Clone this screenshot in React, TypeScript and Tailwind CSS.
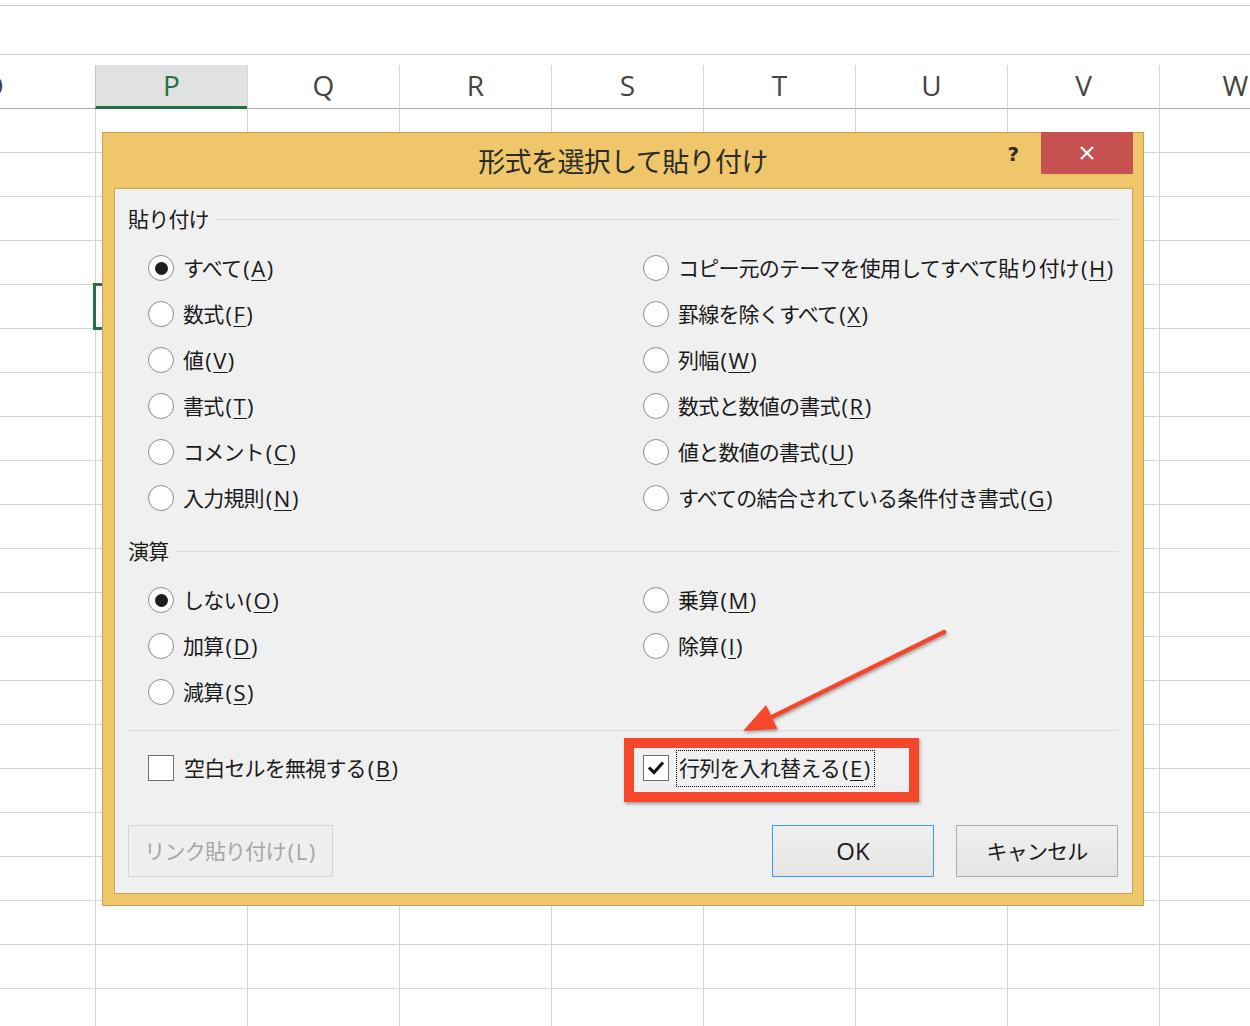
import type { ReactNode } from 'react';

const COLS = ['P', 'Q', 'R', 'S', 'T', 'U', 'V', 'W'];
const ROWS = Array.from({ length: 21 }, (_, i) => i);

// access key in parentheses, latin glyphs a bit larger like Meiryo UI
function Acc({ k }: { k: string }) {
  return (
    <span className="ml-[2px] font-['Open_Sans',sans-serif] text-[22px] tracking-[1.5px]">
      (<span className="underline decoration-1 underline-offset-[3px]">{k}</span>)
    </span>
  );
}

function Radio({ checked, children }: { checked?: boolean; children: ReactNode }) {
  return (
    <div className="flex h-[46px] items-center gap-[9px]">
      <span className="flex h-[26px] w-[26px] shrink-0 items-center justify-center rounded-full border border-[#8c8c8c] bg-white">
        {checked ? <span className="h-[13px] w-[13px] rounded-full bg-[#1e1e1e]" /> : null}
      </span>
      <span className="flex items-center whitespace-nowrap">{children}</span>
    </div>
  );
}

function Check({ checked, focused, children }: { checked?: boolean; focused?: boolean; children: ReactNode }) {
  return (
    <div className="flex h-[46px] items-center gap-[7px]">
      <span className="flex h-[26px] w-[26px] shrink-0 items-center justify-center border border-[#707070] bg-white">
        {checked ? (
          <svg width="18" height="18" viewBox="0 0 18 18">
            <path d="M3 9.5 L7 13.5 L15 4.5" fill="none" stroke="#111" strokeWidth="3" strokeLinecap="square" />
          </svg>
        ) : null}
      </span>
      <span
        className={
          focused
            ? 'flex items-center whitespace-nowrap border border-dotted border-black px-[2px] py-[1px]'
            : 'flex items-center whitespace-nowrap px-[3px] py-[2px]'
        }
      >
        {children}
      </span>
    </div>
  );
}

function SectionLabel({ children }: { children: ReactNode }) {
  return (
    <div className="flex h-[30px] items-center">
      <span className="whitespace-nowrap">{children}</span>
      <span className="ml-[7px] h-px flex-1 bg-[#dcdcdc]" />
    </div>
  );
}

function Sheet() {
  return (
    <div className="w-[1250px]">
      <div className="h-[6px] border-b border-[#c8c8c8]" />
      <div className="h-[49px] border-b border-[#c8c8c8]" />
      <div className="h-[10px]" />
      <div className="flex h-[44px] font-['Open_Sans',sans-serif] text-[28px] text-[#444]">
        <div className="flex w-[95px] shrink-0 items-center border-b border-[#ababab] pb-[4px]">
          <span className="-ml-[18px]">O</span>
        </div>
        {COLS.map((c) => (
          <div
            key={c}
            className={
              c === 'P'
                ? 'flex w-[152px] shrink-0 items-center justify-center border-b-[3px] border-l border-[#c4c4c4] border-b-[#217346] bg-[#e1e1e1] pb-[2px] text-[#217346]'
                : 'flex w-[152px] shrink-0 items-center justify-center border-b border-l border-[#d6d6d6] border-b-[#ababab] pb-[4px]'
            }
          >
            {c}
          </div>
        ))}
      </div>
      {ROWS.map((r) => (
        <div key={r} className="flex h-[44px] border-b border-[#d4d4d4]">
          <div className="w-[95px] shrink-0" />
          {COLS.map((c) => (
            <div key={c} className="w-[152px] shrink-0 border-l border-[#d4d4d4]" />
          ))}
        </div>
      ))}
    </div>
  );
}

function Dialog() {
  return (
    <div className="absolute left-[102px] top-[132px] flex h-[774px] w-[1042px] flex-col border border-[#c6a14f] bg-[#efc76a] font-['Noto_Sans_CJK_JP',sans-serif] text-[#1a1a1a]">
      <div className="grid h-[55px] shrink-0 grid-cols-[1fr_auto_1fr]">
        <div />
        <div className="flex items-center pt-[1px] text-[27px] tracking-[-0.6px] text-[#2b2b2b]">形式を選択して貼り付け</div>
        <div className="flex items-start justify-end pr-[10px]">
          <span className="mr-[22px] mt-[6px] font-['DejaVu_Sans',sans-serif] text-[20px] font-bold text-[#2a2a2a]">?</span>
          <div className="-mt-px flex h-[42px] w-[92px] items-center justify-center bg-[#c75050]">
            <svg width="14" height="14" viewBox="0 0 14 14">
              <path d="M1 1 L13 13 M13 1 L1 13" stroke="#fff" strokeWidth="2.2" />
            </svg>
          </div>
        </div>
      </div>
      <div className="mb-[11px] ml-[11px] mr-[10px] flex-1 border border-[#c9a551] bg-[#f0f0f0] pl-[13px] pr-[14px] pt-[15px] text-[21px] tracking-[-0.8px]">
        <SectionLabel>貼り付け</SectionLabel>
        <div className="mt-[11px] flex pl-[20px]">
          <div className="w-[495px]">
            <Radio checked>すべて<Acc k="A" /></Radio>
            <Radio>数式<Acc k="F" /></Radio>
            <Radio>値<Acc k="V" /></Radio>
            <Radio>書式<Acc k="T" /></Radio>
            <Radio>コメント<Acc k="C" /></Radio>
            <Radio>入力規則<Acc k="N" /></Radio>
          </div>
          <div>
            <Radio>コピー元のテーマを使用してすべて貼り付け<Acc k="H" /></Radio>
            <Radio>罫線を除くすべて<Acc k="X" /></Radio>
            <Radio>列幅<Acc k="W" /></Radio>
            <Radio>数式と数値の書式<Acc k="R" /></Radio>
            <Radio>値と数値の書式<Acc k="U" /></Radio>
            <Radio>すべての結合されている条件付き書式<Acc k="G" /></Radio>
          </div>
        </div>
        <div className="mt-[15px]">
          <SectionLabel>演算</SectionLabel>
        </div>
        <div className="mt-[11px] flex pl-[20px]">
          <div className="w-[495px]">
            <Radio checked>しない<Acc k="O" /></Radio>
            <Radio>加算<Acc k="D" /></Radio>
            <Radio>減算<Acc k="S" /></Radio>
          </div>
          <div>
            <Radio>乗算<Acc k="M" /></Radio>
            <Radio>除算<Acc k="I" /></Radio>
          </div>
        </div>
        <div className="mt-[15px] h-px bg-[#dcdcdc]" />
        <div className="mt-[14px] flex pl-[20px]">
          <div className="w-[495px]">
            <Check>空白セルを無視する<Acc k="B" /></Check>
          </div>
          <div>
            <Check checked focused>行列を入れ替える<Acc k="E" /></Check>
          </div>
        </div>
        <div className="mt-[34px] flex h-[52px] items-stretch">
          <div className="flex w-[205px] items-center justify-center border border-[#d6d6d6] bg-[#efefef] text-[21px] text-[#a6a6a6]">
            リンク貼り付け<span className="ml-[2px] font-['Open_Sans',sans-serif] text-[22px] tracking-[1.5px]">(L)</span>
          </div>
          <div className="ml-auto flex w-[162px] items-center justify-center border border-[#3c9ae8] bg-gradient-to-b from-[#f0f0f0] to-[#e5e5e5] font-['Open_Sans',sans-serif] text-[24px] tracking-normal">
            OK
          </div>
          <div className="ml-[22px] flex w-[162px] items-center justify-center border border-[#adadad] bg-gradient-to-b from-[#f0f0f0] to-[#e5e5e5] text-[21px]">
            キャンセル
          </div>
        </div>
      </div>
    </div>
  );
}

export default function App() {
  return (
    <div className="relative h-[1026px] w-[1250px] overflow-hidden bg-white">
      <Sheet />
      <div className="absolute left-[93px] top-[283px] h-[47px] w-[157px] border-[3px] border-[#217346]" />
      <Dialog />
      <div className="absolute left-[624px] top-[738px] h-[64px] w-[295px] border-[10px] border-[#f4472b] shadow-[1px_2px_3px_rgba(0,0,0,0.35)]" />
      <svg className="absolute left-[730px] top-[620px]" width="230" height="125" viewBox="0 0 230 125">
        <g style={{ filter: 'drop-shadow(1px 2px 1.5px rgba(0,0,0,0.3))' }}>
          <path d="M214 12 L42 97" stroke="#f4472b" strokeWidth="4.5" strokeLinecap="round" />
          <path d="M13 111 L47.5 109 L36 85 Z" fill="#f4472b" />
        </g>
      </svg>
    </div>
  );
}
